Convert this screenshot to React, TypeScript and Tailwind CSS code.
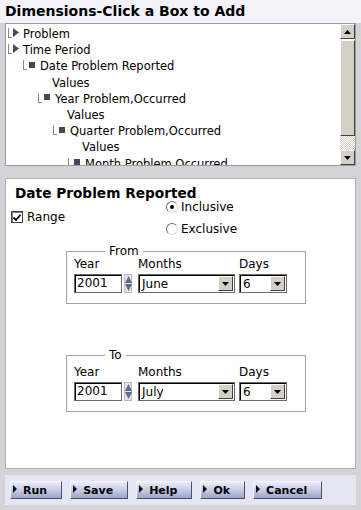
import type { ReactNode } from 'react';

const FONT = { fontFamily: '"DejaVu Sans", Verdana, sans-serif' };

type Row = { pad: string; kind: 'arrow' | 'square' | 'none'; label: string };

const TREE: Row[] = [
  { pad: 'pl-[2px]', kind: 'arrow', label: 'Problem' },
  { pad: 'pl-[2px]', kind: 'arrow', label: 'Time Period' },
  { pad: 'pl-[17px]', kind: 'square', label: 'Date Problem Reported' },
  { pad: 'pl-[46px]', kind: 'none', label: 'Values' },
  { pad: 'pl-[32px]', kind: 'square', label: 'Year Problem,Occurred' },
  { pad: 'pl-[61px]', kind: 'none', label: 'Values' },
  { pad: 'pl-[47px]', kind: 'square', label: 'Quarter Problem,Occurred' },
  { pad: 'pl-[76px]', kind: 'none', label: 'Values' },
  { pad: 'pl-[62px]', kind: 'square', label: 'Month Problem,Occurred' },
];

function TreeRow({ row }: { row: Row }) {
  return (
    <div className={`flex items-center h-[16.2px] text-[11.5px] leading-[16px] whitespace-nowrap ${row.pad}`}>
      {row.kind !== 'none' && (
        <>
          {/* elbow connector */}
          <span className="w-[4px] h-[10px] border-l border-b border-[#8a8a8a] mb-[2px]" />
          {row.kind === 'arrow' ? (
            <svg width="6" height="9" viewBox="0 0 6 9" className="ml-[1px] mr-[4px] mb-[3px]">
              <path d="M0 0 L6 4.5 L0 9 Z" fill="#4a4a58" />
            </svg>
          ) : (
            <span className="w-[6px] h-[6px] bg-[#44485a] ml-[2px] mr-[5px] mb-[3px]" />
          )}
        </>
      )}
      <span>{row.label}</span>
    </div>
  );
}

function ScrollBtn({ down }: { down?: boolean }) {
  return (
    <div className="h-[15px] bg-[#d4d0c8] border border-t-white border-l-white border-b-[#404040] border-r-[#404040] flex items-center justify-center">
      <svg width="7" height="4" viewBox="0 0 7 4">
        <path d={down ? 'M0 0 L7 0 L3.5 4 Z' : 'M0 4 L7 4 L3.5 0 Z'} fill="#000" />
      </svg>
    </div>
  );
}

function Scrollbar() {
  return (
    <div className="w-[15px] h-full flex flex-col">
      <ScrollBtn />
      <div className="h-[96px] mt-[1px] bg-[#d4d0c8] border border-t-white border-l-white border-b-[#404040] border-r-[#404040]" />
      <div className="flex-1 bg-[repeating-conic-gradient(#d4d0c8_0_25%,#ffffff_0_50%)] bg-[length:2px_2px]" />
      <ScrollBtn down />
    </div>
  );
}

function Checkbox() {
  return (
    <span className="w-[12px] h-[12px] bg-white border border-[#404040] shadow-[inset_1px_1px_0_#808080] flex items-center justify-center">
      <svg width="8" height="7" viewBox="0 0 8 7">
        <path d="M0.5 3.5 L3 6 L7.5 0.8" stroke="#000" strokeWidth="1.8" fill="none" />
      </svg>
    </span>
  );
}

function Radio({ checked }: { checked?: boolean }) {
  return (
    <span className="w-[12px] h-[12px] rounded-full bg-white border border-t-[#707070] border-l-[#707070] border-b-[#d8d8d8] border-r-[#d8d8d8] flex items-center justify-center">
      {checked && <span className="w-[4px] h-[4px] rounded-full bg-black" />}
    </span>
  );
}

function DropArrow() {
  return (
    <span className="w-[15px] h-[15px] bg-[#d4d0c8] border border-t-white border-l-white border-b-[#404040] border-r-[#404040] flex items-center justify-center">
      <svg width="7" height="4" viewBox="0 0 7 4">
        <path d="M0 0 L7 0 L3.5 4 Z" fill="#000" />
      </svg>
    </span>
  );
}

function Select({ value, w }: { value: string; w: string }) {
  return (
    <div className={`${w} h-[19px] bg-white border border-[#6a6a6a] shadow-[inset_1px_1px_0_#000] flex items-center justify-between pl-[3px] pr-[1px] text-[12px]`}>
      <span>{value}</span>
      <DropArrow />
    </div>
  );
}

function Spinner() {
  return (
    <div className="w-[8px] h-[19px] ml-[2px] flex flex-col items-center justify-center gap-[1px] bg-[#e4e4ec] border border-[#b8b8c4]">
      <svg width="7" height="7" viewBox="0 0 7 7">
        <path d="M0 7 L7 7 L3.5 0 Z" fill="#5c6a8a" />
      </svg>
      <svg width="7" height="7" viewBox="0 0 7 7">
        <path d="M0 0 L7 0 L3.5 7 Z" fill="#5c6a8a" />
      </svg>
    </div>
  );
}

function DateGroup({ legend, month, extra }: { legend: string; month: string; extra?: boolean }) {
  return (
    <fieldset className={`w-[240px] ml-[51px] border border-[#a0a0a0] pl-[7px] ${extra ? 'pt-[4px] pb-[10px]' : 'pt-0 pb-[10px]'}`}>
      <legend className="ml-[31px] px-[4px] text-[12px] leading-[12px]">{legend}</legend>
      <div className="flex text-[12px] leading-[14px]">
        <span className="w-[64px]">Year</span>
        <span className="w-[101px]">Months</span>
        <span>Days</span>
      </div>
      <div className="flex items-center mt-[3px]">
        <div className="w-[64px] flex items-center">
          <div className="w-[48px] h-[19px] bg-white border border-[#6a6a6a] shadow-[inset_1px_1px_0_#000] pl-[2px] text-[12px] leading-[17px]">2001</div>
          <Spinner />
        </div>
        <div className="w-[101px]">
          <Select value={month} w="w-[97px]" />
        </div>
        <Select value="6" w="w-[48px]" />
      </div>
    </fieldset>
  );
}

function ActionButton({ children }: { children: ReactNode }) {
  return (
    <button className="h-[18px] flex items-center pl-[2px] pr-[14px] bg-gradient-to-b from-[#eceefa] via-[#c8cce4] to-[#9ea4c8] border border-t-[#f4f4ff] border-l-[#f4f4ff] border-b-[#4c5070] border-r-[#4c5070] text-[11px] font-bold leading-none text-black">
      <svg width="4" height="8" viewBox="0 0 4 8" className="mr-[6px] mb-[2px]">
        <path d="M0 0 L4 4 L0 8 Z" fill="#111" />
      </svg>
      {children}
    </button>
  );
}

export default function App() {
  return (
    <div className="w-[361px] h-[510px] bg-[#d4d4d8] overflow-hidden flex flex-col" style={FONT}>

      {/* ── Title ─────────────────────────────── */}
      <div className="h-[23px] bg-[#f2f2f8] pl-[5px] pt-[2px] text-[14px] font-bold leading-[18px] text-black">
        Dimensions-Click a Box to Add
      </div>

      {/* ── Tree ──────────────────────────────── */}
      <div className="mx-[5px] h-[143px] bg-white border border-[#9c9c9c] flex overflow-hidden">
        <div className="flex-1 pt-[2px] overflow-hidden">
          {TREE.map((r, i) => (
            <TreeRow key={i} row={r} />
          ))}
        </div>
        <Scrollbar />
      </div>

      {/* ── Detail panel ──────────────────────── */}
      <div className="mx-[5px] mt-[12px] h-[291px] bg-white border border-[#b0b0b0] pl-[9px] pt-[5px] text-black">
        <div className="text-[13.7px] font-bold leading-[18px]">Date Problem Reported</div>

        <div className="flex mt-[-3px]">
          <div className="w-[151px] pt-[10px]">
            <label className="flex items-center gap-[4px] ml-[-4px] text-[12px] leading-[16px]">
              <Checkbox />
              Range
            </label>
          </div>
          <div className="flex flex-col gap-[6px] text-[12px] leading-[16px]">
            <label className="flex items-center gap-[3px] h-[16px]">
              <Radio checked />
              Inclusive
            </label>
            <label className="flex items-center gap-[3px] h-[16px]">
              <Radio />
              Exclusive
            </label>
          </div>
        </div>

        <div className="mt-[8px]">
          <DateGroup legend="From" month="June" />
        </div>
        <div className="mt-[45px]">
          <DateGroup legend="To" month="July" extra />
        </div>
      </div>

      {/* ── Buttons ───────────────────────────── */}
      <div className="mx-[5px] mt-[6px] h-[30px] bg-[#e6e6f2] flex items-start pt-[6px] pl-[5px] gap-[8px]">
        <ActionButton>Run</ActionButton>
        <ActionButton>Save</ActionButton>
        <ActionButton>Help</ActionButton>
        <ActionButton>Ok</ActionButton>
        <ActionButton>Cancel</ActionButton>
      </div>
    </div>
  );
}
